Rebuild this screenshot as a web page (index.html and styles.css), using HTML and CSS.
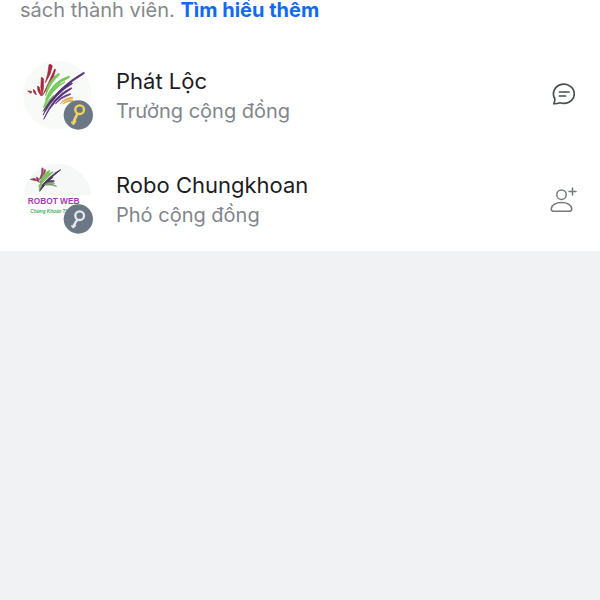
FILE: index.html
```html
<!DOCTYPE html>
<html lang="vi">
<head>
<meta charset="utf-8">
<meta name="viewport" content="width=device-width, initial-scale=1">
<title>Thành viên</title>
<link rel="stylesheet" href="styles.css">
</head>
<body>
<main class="panel">
  <p class="intro">sách thành viên. <a class="more" href="#">Tìm hiểu thêm</a></p>
  <ul class="members">
    <li class="member">
      <svg class="avatar" viewBox="21 15 210 210" aria-hidden="true">
        <circle cx="124" cy="120" r="103" fill="#f8faf8"/>
        <g fill="#a32b3d" stroke="#a32b3d" stroke-width="2" stroke-linejoin="round">
          <path d="M99 29q7-3 10 4q-4 25-21 50q9-28 11-54z"/>
          <path d="M116 42q4 0 2 5q-8 34-37 72q21-44 35-77z"/>
          <path d="M76 67q7 1 7 8q1 24-5 48q-6-28-2-56z"/>
          <path d="M65 93q6 2 7 10l4 20q-14-14-11-30z"/>
          <path d="M52 103q6 2 9 17q-11-7-9-17z"/>
          <path d="M35 108l12 1l-2 6z" fill="#5d4048"/>
        </g>
        <g fill="#78c95c" stroke="#78c95c" stroke-width="3" stroke-linejoin="round">
          <path d="M128 55q4 1 1 6q-27 22-40 61q5-46 39-67z"/>
          <path d="M158 64q5 0 1 4q-46 21-70 66q19-55 69-70z"/>
          <path d="M147 81q-39 20-64 76q15-58 64-76z"/>
          <path d="M113 121l-27 48l-2-5q10-29 29-43z"/>
        </g>
        <g fill="#563077" stroke="#563077" stroke-width="2" stroke-linejoin="round">
          <path d="M203 52q5 1 0 5q-65 37-122 112q44-73 122-117z"/>
          <path d="M168 83q3 1 0 4q-48 27-87 93q29-69 87-97z"/>
          <path d="M166 98q3 1 0 4q-51 28-83 91q27-70 83-95z"/>
          <path d="M163 116q3 2-3 4q-24 8-42 27q15-24 45-31z"/>
        </g>
        <g fill="#dca943" stroke="#dca943" stroke-width="2">
          <path d="M169 127q4 1 0 4q-20 2-37 15q14-18 37-19z"/>
          <path d="M171 135q2 3-3 4q-16 0-28 8q10-12 31-12z"/>
        </g>
        <circle cx="187" cy="180" r="44" fill="#6c7785"/>
        <g fill="none" stroke="#f4d35b" stroke-linecap="round" stroke-linejoin="round">
          <circle cx="191" cy="164" r="13" stroke-width="7"/>
          <path d="M184 177l-11 23" stroke-width="8"/>
          <path d="M179 199l-7 9l-5-6" stroke-width="5"/>
        </g>
      </svg>
      <div class="info">
        <h2 class="name">Phát Lộc</h2>
        <p class="role">Trưởng cộng đồng</p>
      </div>
      <button class="action" type="button" aria-label="Nhắn tin">
        <svg class="icon" viewBox="0 0 30 30" fill="none" stroke="#4a4d50" stroke-width="1.7" stroke-linecap="round" stroke-linejoin="round">
          <path d="M5.800 18.500A10.400 9.600 0 1 1 11 22.700Q8 23.900 4.700 23.700Q6.300 21.500 5.800 18.500z"/>
          <path d="M10.500 12H20M10.500 16H16.500"/>
        </svg>
      </button>
    </li>
    <li class="member">
      <svg class="avatar" viewBox="21 27 210 210" aria-hidden="true">
        <defs>
          <clipPath id="round"><circle cx="124" cy="129" r="103"/></clipPath>
        </defs>
        <g clip-path="url(#round)">
          <rect x="21" y="24" width="210" height="96" fill="#f6f8f7"/>
          <g fill="#8d3d55" stroke="#8d3d55" stroke-width="2">
            <path d="M78 38l4 3l-4 26l-8 7q9-18 8-36z"/>
            <path d="M86 43l3 2l-10 32l-7 7z"/>
            <path d="M62 66l5 4l3 12l-8-5z"/>
            <path d="M43 73l14-3l4 8z"/>
          </g>
          <g fill="#80bd63" stroke="#80bd63" stroke-width="3">
            <path d="M101 46l-4 12l-23 25q4-27 27-37z"/>
            <path d="M111 50l-12 14l-27 26q12-30 39-40z"/>
            <path d="M80 77l-9 33l-2-18z"/>
          </g>
          <g fill="#4f365e" stroke="#4f365e" stroke-width="3">
            <path d="M134 44q-32 23-62 63q23-44 62-63z"/>
            <path d="M111 67q-21 12-36 34q12-29 36-34z"/>
            <path d="M115 78q-24 3-36 13q11-18 36-13z"/>
          </g>
          <g fill="#779365" stroke="#779365" stroke-width="2">
            <path d="M116 85q-16-2-32 4q18-13 32-4z"/>
            <path d="M122 94q-18-6-33-4q18-7 33 4z"/>
          </g>
          <text class="brand" x="35" y="148">ROBOT WEB</text>
          <text class="tagline" x="43" y="175">Chứng Khoán Thông</text>
        </g>
        <circle cx="187" cy="192" r="44" fill="#6c7785"/>
        <g fill="none" stroke="#e6e9ec" stroke-linecap="round" stroke-linejoin="round">
          <circle cx="191" cy="182" r="13" stroke-width="7"/>
          <path d="M184 194l-12 19" stroke-width="7"/>
          <path d="M179 211l-7 7l-5-5" stroke-width="4"/>
        </g>
      </svg>
      <div class="info">
        <h2 class="name">Robo Chungkhoan</h2>
        <p class="role">Phó cộng đồng</p>
      </div>
      <button class="action" type="button" aria-label="Thêm bạn">
        <svg class="icon" viewBox="0 0 30 30" fill="none" stroke="#76797c" stroke-width="1.5" stroke-linecap="round" stroke-linejoin="round">
          <circle cx="12.500" cy="10.700" r="4.700"/>
          <path d="M4.500 27.200Q2 27.200 2.300 24.500C3.200 20.500 7 18.400 12.500 18.400S21.800 20.500 22.700 24.500Q23 27.200 20.500 27.200z"/>
          <path d="M23.500 4V11M20 7.500H27"/>
        </svg>
      </button>
    </li>
  </ul>
</main>
</body>
</html>
```
FILE: styles.css
```css
* {
  box-sizing: border-box;
}

body {
  margin: 0;
  background: #f0f2f4;
  font-family: Inter, "Noto Sans", sans-serif;
}

.panel {
  background: #fff;
}

.intro {
  margin: 0;
  padding: 0 20px 23px;
  font-size: 20px;
  line-height: 20px;
  color: #85888c;
}

.more {
  color: #0f6bf0;
  font-weight: 700;
  text-decoration: none;
}

.members {
  margin: 0;
  padding: 0;
  list-style: none;
}

.member {
  display: flex;
  align-items: center;
  padding: 17px 21px 17px 23px;
}

.avatar {
  flex: none;
  width: 70px;
  height: 70px;
}

.brand {
  font: bold 25px "Liberation Sans", sans-serif;
  fill: #a33bb0;
}

.tagline {
  font: italic bold 14px "Liberation Sans", sans-serif;
  fill: #43ad68;
}

.info {
  flex: 1;
  min-width: 0;
  margin-left: 23px;
}

.name {
  margin: 0;
  font-size: 22px;
  font-weight: 400;
  line-height: 32px;
  color: #1c1d1f;
}

.role {
  margin: 0;
  font-size: 20px;
  line-height: 28px;
  color: #81868c;
}

.action {
  display: flex;
  padding: 0;
  border: 0;
  background: none;
  cursor: pointer;
}

.icon {
  width: 30px;
  height: 30px;
}
```
